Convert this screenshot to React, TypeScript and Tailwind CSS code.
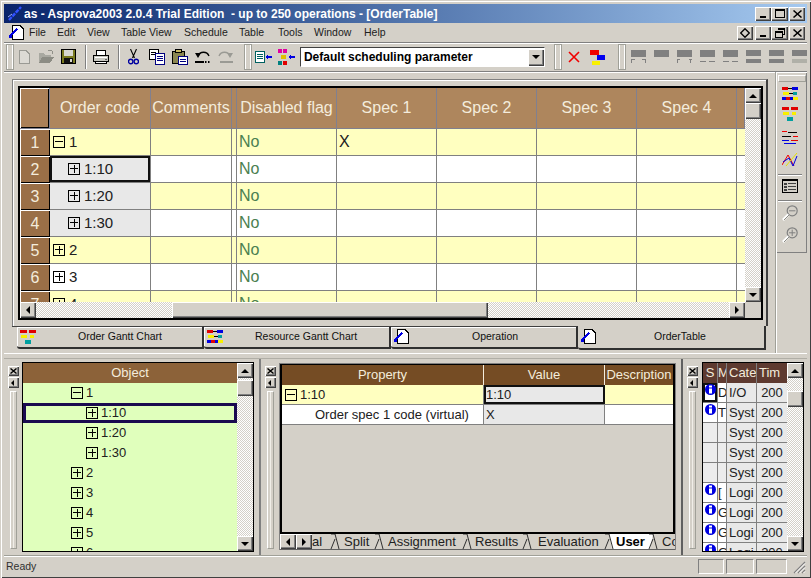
import React from "react";

const bevel = "shadow-[inset_1px_1px_0_#fff,inset_-1px_-1px_0_#404040,inset_-2px_-2px_0_#808080]";
const track = "bg-[repeating-conic-gradient(#d4d0c8_0_25%,#ffffff_0_50%)] bg-[length:2px_2px]";

function Tri({ dir }: { dir: "up" | "down" | "left" | "right" }) {
  const p = { up: "4,0 0,4 8,4", down: "0,0 8,0 4,4", left: "4,0 4,8 0,4", right: "0,0 0,8 4,4" }[dir];
  const horizontal = dir === "up" || dir === "down";
  return (
    <svg width={horizontal ? 8 : 4} height={horizontal ? 4 : 8} viewBox={horizontal ? "0 0 8 4" : "0 0 4 8"}>
      <polygon points={p} fill="#000" />
    </svg>
  );
}

function SB({ dir, w = 16, h = 16 }: { dir: "up" | "down" | "left" | "right"; w?: number; h?: number }) {
  return (
    <div style={{ width: w, height: h }} className={`bg-[#d4d0c8] flex items-center justify-center shrink-0 ${bevel}`}>
      <Tri dir={dir} />
    </div>
  );
}

function VScroll({ thumbTop, h, w = 16 }: { thumbTop: number; h: number; w?: number }) {
  return (
    <div style={{ width: w, height: h }} className="flex flex-col shrink-0">
      <SB dir="up" w={w} h={15} />
      <div style={{ height: thumbTop }} className={`${track} shrink-0`} />
      <div className={`h-[16px] shrink-0 bg-[#d4d0c8] ${bevel}`} />
      <div className={`flex-1 ${track}`} />
      <SB dir="down" w={w} h={15} />
    </div>
  );
}

function Box({ minus }: { minus?: boolean }) {
  return (
    <svg width="12" height="12" viewBox="0 0 12 12" className="shrink-0" shapeRendering="crispEdges">
      <rect x="0.5" y="0.5" width="11" height="11" fill="none" stroke="#000" />
      <rect x="2" y="5" width="8" height="1" fill="#000" />
      {!minus && <rect x="5.5" y="2" width="1" height="8" fill="#000" />}
    </svg>
  );
}

function DocPen({ size = 16 }: { size?: number }) {
  return (
    <svg width={size} height={size} viewBox="0 0 16 16" shapeRendering="crispEdges">
      <polygon points="3.5,0.5 11,0.5 14.5,4 14.5,14.5 3.5,14.5" fill="#fff" stroke="#000" />
      <polygon points="1,10 7,3 8.5,4.5 2.5,11" fill="#0000e0" />
      <rect x="0" y="10" width="3" height="3" fill="#0000e0" />
    </svg>
  );
}

function Rects({ items, w = 16, h = 16 }: { items: [number, number, number, number, string][]; w?: number; h?: number }) {
  return (
    <svg width={w} height={h} viewBox={`0 0 ${w} ${h}`} shapeRendering="crispEdges" className="shrink-0">
      {items.map((r, i) => (
        <rect key={i} x={r[0]} y={r[1]} width={r[2]} height={r[3]} fill={r[4]} />
      ))}
    </svg>
  );
}

const resGantt: [number, number, number, number, string][] = [
  [0, 1, 6, 3, "#e00000"], [6, 2, 4, 1, "#000"], [10, 1, 6, 3, "#0000e0"],
  [1, 6, 6, 3, "#f8f000"], [7, 7, 4, 1, "#000"], [11, 6, 4, 3, "#00a0a0"],
  [0, 11, 4, 3, "#0000e0"], [4, 11, 4, 3, "#e00000"], [8, 11, 3, 3, "#0000e0"], [11, 11, 5, 3, "#f8f000"],
];
const ordGantt: [number, number, number, number, string][] = [
  [0, 1, 7, 3, "#e00000"], [9, 1, 7, 3, "#e00000"],
  [1, 6, 6, 3, "#f8f000"], [10, 6, 4, 3, "#f8f000"],
  [5, 11, 6, 4, "#00a0a0"],
];

function IconNew() {
  return (
    <svg width="16" height="16" viewBox="0 0 16 16" shapeRendering="crispEdges">
      <polygon points="3.5,1.5 10,1.5 13.5,5 13.5,14.5 3.5,14.5" fill="#dcdad4" stroke="#9a9a94" />
    </svg>
  );
}
function IconOpen() {
  return (
    <svg width="17" height="16" viewBox="0 0 17 16" shapeRendering="crispEdges">
      <polygon points="1,4 6,4 7,6 13,6 13,8 5,8 1,14" fill="#a8a8a0" />
      <polygon points="4,8 16,8 12,14 1,14" fill="#8c8c84" />
      <rect x="10" y="1" width="4" height="1" fill="#909088" />
      <rect x="14" y="2" width="1" height="3" fill="#909088" />
    </svg>
  );
}
function IconSave() {
  return (
    <svg width="16" height="16" viewBox="0 0 16 16" shapeRendering="crispEdges">
      <rect x="0" y="0" width="15" height="15" fill="#000" />
      <rect x="1" y="1" width="13" height="13" fill="#7a7a20" />
      <rect x="3" y="1" width="9" height="6" fill="#d8d8d0" />
      <rect x="3" y="9" width="9" height="5" fill="#111" />
      <rect x="9" y="10" width="2" height="3" fill="#d8d8d0" />
    </svg>
  );
}
function IconPrint() {
  return (
    <svg width="17" height="16" viewBox="0 0 17 16" shapeRendering="crispEdges">
      <polygon points="4,1 12,1 13,6 3,6" fill="#fff" stroke="#000" strokeWidth="1" />
      <rect x="0.5" y="6.5" width="15" height="6" fill="#c8c8c0" stroke="#000" />
      <rect x="2" y="8" width="12" height="1" fill="#fff" />
      <rect x="2.5" y="12.5" width="11" height="2" fill="#fff" stroke="#000" />
      <rect x="12" y="10" width="2" height="1" fill="#606060" />
    </svg>
  );
}
function IconCut() {
  return (
    <svg width="11" height="16" viewBox="0 0 11 16">
      <path d="M2.5 0 L6.5 9 M8.5 0 L4.5 9" stroke="#000" strokeWidth="1.1" fill="none" />
      <circle cx="2.7" cy="12.5" r="2.2" fill="none" stroke="#0000a0" strokeWidth="1.4" />
      <circle cx="8.3" cy="12.5" r="2.2" fill="none" stroke="#0000a0" strokeWidth="1.4" />
    </svg>
  );
}
function IconCopy() {
  return (
    <svg width="16" height="16" viewBox="0 0 16 16" shapeRendering="crispEdges">
      <rect x="0.5" y="0.5" width="9" height="10" fill="#fff" stroke="#000" />
      <rect x="2" y="3" width="5" height="1" fill="#000" />
      <rect x="2" y="5" width="5" height="1" fill="#000" />
      <rect x="6.5" y="4.5" width="9" height="11" fill="#fff" stroke="#000080" />
      <rect x="8" y="7" width="6" height="1" fill="#000080" />
      <rect x="8" y="9" width="6" height="1" fill="#000080" />
      <rect x="8" y="11" width="6" height="1" fill="#000080" />
    </svg>
  );
}
function IconPaste() {
  return (
    <svg width="16" height="16" viewBox="0 0 16 16" shapeRendering="crispEdges">
      <rect x="0.5" y="2.5" width="12" height="12" fill="#8a8650" stroke="#000" />
      <rect x="3.5" y="0.5" width="6" height="3" fill="#c8b860" stroke="#000" />
      <rect x="6.5" y="7.5" width="9" height="8" fill="#fff" stroke="#000080" />
      <rect x="8" y="10" width="6" height="1" fill="#000080" />
      <rect x="8" y="12" width="6" height="1" fill="#000080" />
    </svg>
  );
}
function IconUndo({ on }: { on?: boolean }) {
  const c = on ? "#000" : "#9a9a94";
  return (
    <svg width="16" height="14" viewBox="0 0 16 14">
      <path d="M3 6 C5 1 12 1 14 6" fill="none" stroke={c} strokeWidth="1.3" />
      <polygon points="0,3 6,3 3,8" fill={c} />
      <rect x="0" y="11" width="9" height="2" fill={c} />
      <rect x="10" y="11" width="1.5" height="2" fill={c} />
      <rect x="13" y="11" width="1.5" height="2" fill={c} />
    </svg>
  );
}
function IconRedo() {
  const c = "#9a9a94";
  return (
    <svg width="16" height="14" viewBox="0 0 16 14">
      <path d="M2 6 C4 1 11 1 13 6" fill="none" stroke={c} strokeWidth="1.3" />
      <polygon points="10,3 16,3 13,8" fill={c} />
      <rect x="3" y="11" width="13" height="2" fill={c} />
    </svg>
  );
}
function IconListArrow() {
  return (
    <svg width="17" height="14" viewBox="0 0 17 14" shapeRendering="crispEdges">
      <rect x="0.5" y="1.5" width="9" height="11" fill="#fff" stroke="#006060" />
      <rect x="2" y="4" width="6" height="1" fill="#006060" />
      <rect x="2" y="6" width="6" height="1" fill="#006060" />
      <rect x="2" y="8" width="6" height="1" fill="#006060" />
      <polygon points="10,7 13,4 13,6 17,6 17,8 13,8 13,10" fill="#0000e0" />
    </svg>
  );
}
function IconTreeArrow() {
  return (
    <svg width="17" height="16" viewBox="0 0 17 16" shapeRendering="crispEdges">
      <rect x="0" y="0" width="4" height="4" fill="#e000a0" />
      <rect x="5" y="0" width="4" height="4" fill="#e000a0" />
      <rect x="3" y="6" width="5" height="4" fill="#e0c000" />
      <rect x="0" y="12" width="4" height="4" fill="#008080" />
      <rect x="5" y="12" width="4" height="4" fill="#e00000" />
      <polygon points="10,8 13,5 13,7 17,7 17,9 13,9 13,11" fill="#0000e0" />
    </svg>
  );
}
function IconRedX() {
  return (
    <svg width="12" height="12" viewBox="0 0 12 12">
      <path d="M1 1 L11 11 M11 1 L1 11" stroke="#f00000" strokeWidth="1.6" fill="none" />
    </svg>
  );
}

function Dock({ v }: { v: number }) {
  const d: [number, number, number, number, string][][] = [
    [[0, 0, 15, 7, "#808080"], [0, 9, 4, 1, "#808080"], [11, 9, 4, 1, "#808080"], [0, 9, 1, 4, "#808080"], [14, 9, 1, 4, "#808080"]],
    [[0, 0, 15, 7, "#808080"]],
    [[0, 0, 15, 7, "#808080"], [0, 9, 3, 1, "#808080"], [12, 9, 3, 1, "#808080"], [0, 9, 1, 4, "#808080"], [13, 9, 1, 4, "#808080"]],
    [[0, 0, 15, 7, "#808080"], [0, 11, 6, 1, "#808080"], [9, 11, 6, 1, "#808080"]],
    [[0, 0, 15, 7, "#808080"], [0, 11, 6, 1, "#808080"], [9, 11, 6, 1, "#808080"]],
    [[0, 0, 15, 6, "#808080"], [0, 9, 15, 4, "#808080"]],
    [[0, 0, 15, 6, "#808080"], [0, 9, 15, 4, "#808080"]],
    [[0, 0, 15, 6, "#808080"], [0, 9, 15, 4, "#b0b0a8"]],
  ];
  return <Rects items={d[v]} w={15} h={14} />;
}

function Grip({ cls = "" }: { cls?: string }) {
  return <div className={`w-[6px] border-l border-r border-white bg-[#d4d0c8] outline outline-1 outline-[#a0a098] ${cls}`} />;
}

function Sep() {
  return <div className="w-[2px] h-[24px] border-l border-[#808080] border-r border-r-white" />;
}

function WinBtn({ children, w = 16 }: { children: React.ReactNode; w?: number }) {
  return (
    <div style={{ width: w }} className={`h-[14px] bg-[#d4d0c8] flex items-center justify-center ${bevel}`}>
      {children}
    </div>
  );
}
const XGlyph = () => (
  <svg width="9" height="8" viewBox="0 0 9 8">
    <path d="M0.5 0.5 L8.5 7.5 M8.5 0.5 L0.5 7.5" stroke="#000" strokeWidth="1.5" />
  </svg>
);
const MinGlyph = () => <div className="w-[6px] h-[2px] bg-black mt-[6px]" />;
const MaxGlyph = () => <div className="w-[10px] h-[9px] border border-black border-t-2" />;
const RestoreGlyph = () => (
  <svg width="10" height="10" viewBox="0 0 10 10" shapeRendering="crispEdges">
    <path d="M3 2 V0.5 H9.5 V6 H7.5 M0.5 3.5 H7 V9.5 H0.5 Z" fill="none" stroke="#000" />
    <rect x="0" y="3" width="7" height="2" fill="#000" />
    <rect x="3" y="0" width="7" height="2" fill="#000" />
  </svg>
);
const Diamond = () => (
  <svg width="10" height="10" viewBox="0 0 10 10">
    <polygon points="5,0.7 9.3,5 5,9.3 0.7,5" fill="none" stroke="#000" strokeWidth="1.3" />
  </svg>
);

const menus: [string, number][] = [
  ["File", 28], ["Edit", 30], ["View", 34], ["Table View", 63], ["Schedule", 55], ["Table", 39], ["Tools", 36], ["Window", 50], ["Help", 30],
];
const cols = [30, 101, 81, 5, 100, 100, 100, 100, 100, 8];
const heads = ["", "Order code", "Comments", "", "Disabled flag", "Spec 1", "Spec 2", "Spec 3", "Spec 4", ""];

const mainRows = [
  { n: "1", code: "1", level: 0, minus: true, spec: "X" },
  { n: "2", code: "1:10", level: 1, sel: true },
  { n: "3", code: "1:20", level: 1 },
  { n: "4", code: "1:30", level: 1 },
  { n: "5", code: "2", level: 0 },
  { n: "6", code: "3", level: 0 },
  { n: "7", code: "4", level: 0 },
];

function MainGrid() {
  return (
    <div className="ml-[5px] w-[745px] h-[234px] border-2 border-black flex flex-col bg-[#d4d0c8]">
      <div className="flex h-[214px]">
        <div className="w-[725px] h-[214px] overflow-hidden flex flex-col">
          <div className="flex h-[41px] shrink-0">
            {cols.map((w, i) => (
              <div
                key={i}
                style={{ width: w }}
                className={`shrink-0 h-[41px] flex items-center justify-center text-[16px] font-light text-[#f4ecdc] whitespace-nowrap overflow-hidden border-r border-b border-[#808090] ${i === 0 ? "bg-[#ab8057] shadow-[inset_1px_1px_0_#fff,inset_-1px_-1px_0_#000]" : "bg-[#ae865d]"}`}
              >
                {heads[i]}
              </div>
            ))}
          </div>
          {mainRows.map((r, ri) => {
            const bg = ri % 2 === 0 ? "bg-[#ffffc0]" : "bg-white";
            return (
              <div key={r.n} className="flex h-[27px] shrink-0">
                <div className="w-[30px] shrink-0 bg-[#9a6f47] text-[#f4ecdc] text-[16px] flex items-center justify-center shadow-[inset_1px_1px_0_#fff,inset_-1px_-1px_0_#000]">
                  {r.n}
                </div>
                <div
                  className={`w-[101px] shrink-0 flex items-center gap-[4px] text-[15px] text-[#202020] border-r border-b border-[#808080] ${r.level ? "bg-[#e8e8e8] pl-[18px]" : `${bg} pl-[3px]`} ${r.sel ? "shadow-[inset_0_0_0_2px_#101010]" : ""}`}
                >
                  <Box minus={r.minus} />
                  <span>{r.code}</span>
                </div>
                <div className={`w-[81px] shrink-0 border-r border-b border-[#808080] ${bg}`} />
                <div className={`w-[5px] shrink-0 border-r border-b border-[#808080] ${bg}`} />
                <div className={`w-[100px] shrink-0 flex items-center pl-[2px] text-[16px] text-[#4a8050] border-r border-b border-[#808080] ${bg}`}>No</div>
                <div className={`w-[100px] shrink-0 flex items-center pl-[2px] text-[16px] text-[#202020] border-r border-b border-[#808080] ${bg}`}>{r.spec}</div>
                <div className={`w-[100px] shrink-0 border-r border-b border-[#808080] ${bg}`} />
                <div className={`w-[100px] shrink-0 border-r border-b border-[#808080] ${bg}`} />
                <div className={`w-[100px] shrink-0 border-r border-b border-[#808080] ${bg}`} />
                <div className={`w-[8px] shrink-0 border-b border-[#808080] ${bg}`} />
              </div>
            );
          })}
        </div>
        <VScroll thumbTop={0} h={214} />
      </div>
      <div className="flex h-[16px]">
        <SB dir="left" />
        <div className={`w-[136px] ${track}`} />
        <div className={`w-[316px] bg-[#d4d0c8] ${bevel}`} />
        <div className={`w-[241px] ${track}`} />
        <SB dir="right" />
        <div className="w-[16px] bg-[#d4d0c8]" />
      </div>
    </div>
  );
}

function TabBtn({ icon, label, w, textPl }: { icon: React.ReactNode; label: string; w: number; textPl: number }) {
  return (
    <div
      style={{ width: w }}
      className="h-[23px] shrink-0 border-t border-t-[#404040] border-r-2 border-b-2 border-r-[#303030] border-b-[#303030] rounded-bl-[3px] shadow-[inset_1px_1px_0_#fff] flex items-center text-[10.5px] text-[#101010] pl-[3px]"
    >
      <div className="w-[16px] shrink-0 flex items-center">{icon}</div>
      <div style={{ paddingLeft: textPl }} className="whitespace-nowrap">{label}</div>
    </div>
  );
}

function DockCtl() {
  return (
    <div className="w-[18px] shrink-0 flex flex-col items-center pt-[7px]">
      <div className={`w-[11px] h-[10px] flex items-center justify-center bg-[#d4d0c8] ${bevel}`}>
        <svg width="7" height="6" viewBox="0 0 7 6"><path d="M0.5 0.5 L6.5 5.5 M6.5 0.5 L0.5 5.5" stroke="#000" strokeWidth="1.4" /></svg>
      </div>
      <div className={`w-[11px] h-[11px] mt-[1px] flex items-center justify-center bg-[#d4d0c8] ${bevel}`}>
        <svg width="4" height="6" viewBox="0 0 4 6"><polygon points="3,0 3,6 0,3" fill="#000" /></svg>
      </div>
      <div className="w-[7px] h-[158px] mt-[3px] border border-white border-r-[#a0a098] border-b-[#a0a098] flex justify-center">
        <div className="w-px h-full bg-[#f0eee8]" />
      </div>
    </div>
  );
}

function TabLambda({ white }: { white?: "l" | "r" }) {
  return (
    <svg width="12" height="16" viewBox="0 0 12 16" className="shrink-0">
      {white === "r" && <polygon points="6,0 12,0 12,15 9,15" fill="#fff" />}
      {white === "l" && <polygon points="0,0 6,0 3,15 0,15" fill="#fff" />}
      <path d="M2 0 L6 0 M6 0 L10 15 M6 5 L2 15" stroke="#303030" strokeWidth="1" fill="none" />
    </svg>
  );
}

const tree: [string, number, boolean?, boolean?][] = [
  ["1", 0, true], ["1:10", 1, false, true], ["1:20", 1], ["1:30", 1], ["2", 0], ["3", 0], ["4", 0], ["5", 0], ["6", 0],
];

const Info = () => (
  <svg width="11" height="11" viewBox="0 0 11 11" className="shrink-0">
    <circle cx="5.5" cy="5.5" r="5.5" fill="#0000e0" />
    <rect x="4" y="1.5" width="3" height="2" fill="#fff" />
    <rect x="4" y="4.5" width="3" height="5" fill="#fff" />
  </svg>
);

const logRows: [boolean, string, string][] = [
  [true, "D", "I/O"], [true, "T", "Syst"], [false, "", "Syst"], [false, "", "Syst"], [false, "", "Syst"],
  [true, "[", "Logi"], [true, "G", "Logi"], [true, "G", "Logi"], [true, "G", "Logi"],
];

const ZoomIcon = ({ plus }: { plus?: boolean }) => (
  <svg width="16" height="16" viewBox="0 0 16 16" className="block">
    <circle cx="10.2" cy="5.8" r="5" fill="none" stroke="#808080" strokeWidth="1.2" />
    <path d={plus ? "M7 5.8 H13.4 M10.2 2.6 V9" : "M7 5.8 H13.4"} stroke="#808080" strokeWidth="1" />
    <path d="M1 15 L6.5 9.5" stroke="#fff" strokeWidth="2.6" />
    <path d="M2 15 L7 10" stroke="#8a8a84" strokeWidth="1" />
  </svg>
);

export default function App() {
  return (
    <div className="w-[811px] h-[578px] overflow-hidden bg-[#d4d0c8] flex flex-col pt-[4px] pb-[2px] px-[4px] text-black [font-family:'Liberation_Sans',Arial,sans-serif] shadow-[inset_1px_1px_0_#d4d0c8,inset_2px_2px_0_#fff,inset_-1px_-1px_0_#404040]">
      {/* Title bar */}
      <div className="h-[19px] shrink-0 bg-gradient-to-r from-[#0a246a] to-[#a6caf0] flex items-center pl-[3px] pr-[2px]">
        <svg width="17" height="17" viewBox="0 0 17 17" className="shrink-0">
          <path d="M2 15 L14 2" stroke="#3050ff" strokeWidth="2.4" strokeDasharray="4 1" />
          <path d="M1 12 L5 9" stroke="#a0b0ff" strokeWidth="1" />
        </svg>
        <div className="flex-1 text-white font-bold text-[12px] whitespace-pre">as - Asprova2003 2.0.4 Trial Edition  - up to 250 operations - [OrderTable]</div>
        <div className="flex">
          <WinBtn><MinGlyph /></WinBtn>
          <WinBtn w={17}><MaxGlyph /></WinBtn>
          <div className="w-px" />
          <WinBtn><XGlyph /></WinBtn>
        </div>
      </div>
      {/* Menu bar */}
      <div className="h-[19px] shrink-0 flex items-center pl-[5px] pr-[2px] text-[10.5px] text-[#202020]">
        <DocPen />
        <div className="flex ml-[4px] flex-1">
          {menus.map(([m, w]) => (
            <div key={m} style={{ width: w }} className="whitespace-nowrap">{m}</div>
          ))}
        </div>
        <div className="flex">
          <WinBtn><Diamond /></WinBtn>
          <div className="w-[2px]" />
          <WinBtn><MinGlyph /></WinBtn>
          <WinBtn w={17}><RestoreGlyph /></WinBtn>
          <div className="w-px" />
          <WinBtn><XGlyph /></WinBtn>
        </div>
      </div>
      {/* Toolbar */}
      <div className="h-[30px] shrink-0 border-t border-t-[#808080] border-b border-b-[#808080] shadow-[inset_0_1px_0_#fff,0_1px_0_#fff] flex items-center pl-[3px] overflow-hidden">
        <Grip cls="h-[24px]" />
        <div className="ml-[3px] flex items-center w-[16px]"><IconNew /></div>
        <div className="ml-[6px] w-[17px]"><IconOpen /></div>
        <div className="ml-[6px] w-[16px]"><IconSave /></div>
        <div className="ml-[8px]"><Sep /></div>
        <div className="ml-[6px] w-[17px]"><IconPrint /></div>
        <div className="ml-[8px]"><Sep /></div>
        <div className="ml-[8px] w-[11px]"><IconCut /></div>
        <div className="ml-[10px] w-[16px]"><IconCopy /></div>
        <div className="ml-[7px] w-[16px]"><IconPaste /></div>
        <div className="ml-[7px] w-[16px]"><IconUndo on /></div>
        <div className="ml-[6px] w-[16px]"><IconRedo /></div>
        <div className="ml-[12px]"><Grip cls="h-[24px]" /></div>
        <div className="ml-[4px] w-[17px]"><IconListArrow /></div>
        <div className="ml-[6px] w-[17px]"><IconTreeArrow /></div>
        <div className="ml-[5px] w-[248px] h-[20px] bg-white border-t border-l border-t-[#404040] border-l-[#404040] border-r border-b border-r-white border-b-white flex items-center">
          <div className="flex-1 pl-[3px] text-[12px] font-bold whitespace-nowrap">Default scheduling parameter</div>
          <SB dir="down" w={16} h={17} />
        </div>
        <div className="ml-[10px]"><Grip cls="h-[24px]" /></div>
        <div className="ml-[7px] w-[12px]"><IconRedX /></div>
        <div className="ml-[10px]">
          <Rects w={16} h={16} items={[[0, 1, 9, 5, "#f00000"], [7, 6, 8, 5, "#0000f0"], [2, 12, 8, 4, "#f8f000"]]} />
        </div>
        <div className="ml-[13px]"><Grip cls="h-[24px]" /></div>
        <div className="ml-[6px] flex gap-[8px]">
          {[0, 1, 2, 3, 4, 5, 6, 7].map((v) => <Dock key={v} v={v} />)}
        </div>
      </div>
      {/* Main area */}
      <div className="h-[281px] shrink-0 flex">
        <div className="flex-1 min-w-0 flex flex-col">
          <div className="mt-[7px] ml-[8px] w-[756px] h-[247px] shrink-0 border-t border-l border-r-2 border-t-[#808080] border-l-[#808080] border-r-[#404040] shadow-[inset_1px_1px_0_#fff] pt-[6px]">
            <MainGrid />
          </div>
          <div className="flex ml-[8px]">
            <div className="w-[5px] h-[1px] bg-[#404040]" />
            <TabBtn w={187} textPl={42} label="Order Gantt Chart" icon={<Rects items={ordGantt} />} />
            <TabBtn w={187} textPl={32} label="Resource Gantt Chart" icon={<Rects items={resGantt} />} />
            <TabBtn w={187} textPl={62} label="Operation" icon={<DocPen />} />
            <div className="w-[188px] h-[24px] shrink-0 border-r-2 border-b-2 border-r-[#303030] border-b-[#303030] rounded-bl-[3px] flex items-center text-[10.5px] text-[#101010] pl-[3px]">
              <DocPen />
              <span className="pl-[57px]">OrderTable</span>
            </div>
          </div>
        </div>
        {/* Right toolbar */}
        <div className="w-[32px] shrink-0 border-l border-l-[#a0a098] shadow-[inset_1px_0_0_#fff]">
          <div className="ml-px w-[30px] h-[180px] mt-[1px] pr-[3px] border-r border-b border-r-[#808080] border-b-[#808080] flex flex-col items-center">
            <div className="w-[28px] ml-[3px] h-[7px] mt-[2px] border border-white border-b-[#a0a098] border-r-[#a0a098] shrink-0" />
            <div className="mt-[4px]"><Rects items={resGantt} /></div>
            <div className="mt-[4px]"><Rects items={ordGantt} /></div>
            <div className="mt-[7px]">
              <Rects items={[[0, 2, 5, 1, "#f00000"], [6, 3, 9, 1, "#000"], [0, 7, 9, 1, "#000"], [11, 7, 5, 1, "#f00000"], [0, 11, 7, 1, "#0000e0"], [9, 11, 7, 1, "#e00000"], [2, 14, 12, 1, "#0000e0"]]} />
            </div>
            <div className="mt-[7px]">
              <svg width="16" height="16" viewBox="0 0 16 16" className="block">
                <path d="M0 13 L6 3 L12 14" stroke="#f00000" fill="none" />
                <path d="M1 10 L7 6 L11 14 L15 4" stroke="#0000e0" fill="none" />
                <path d="M4 14 L9 8 L15 1" stroke="#e8e000" fill="none" />
              </svg>
            </div>
            <div className="w-[24px] h-px bg-[#808080] mt-[6px] shadow-[0_1px_0_#fff]" />
            <div className="mt-[4px]">
              <svg width="16" height="14" viewBox="0 0 16 14" shapeRendering="crispEdges" className="block">
                <rect x="0.5" y="0.5" width="15" height="13" fill="#d4d0c8" stroke="#000" />
                <rect x="0" y="0" width="16" height="2" fill="#000" />
                <rect x="2" y="4" width="3" height="2" fill="#404040" />
                <rect x="6" y="4" width="8" height="1" fill="#404040" />
                <rect x="2" y="7" width="3" height="2" fill="#404040" />
                <rect x="6" y="7" width="8" height="1" fill="#404040" />
                <rect x="6" y="10" width="8" height="1" fill="#404040" />
                <rect x="2" y="10" width="3" height="2" fill="#404040" />
              </svg>
            </div>
            <div className="w-[24px] h-px bg-[#808080] mt-[7px] shadow-[0_1px_0_#fff]" />
            <div className="mt-[4px]"><ZoomIcon /></div>
            <div className="mt-[6px]"><ZoomIcon plus /></div>
          </div>
        </div>
      </div>
      {/* Splitter */}
      <div className="h-[6px] shrink-0 border-t border-t-white border-b border-b-[#b0aea6]" />
      {/* Lower panes */}
      <div className="h-[197px] shrink-0 flex">
        {/* Left pane */}
        <div className="w-[257px] shrink-0 flex border-r-2 border-r-[#808080]">
          <DockCtl />
          <div className="mt-[3px] w-[232px] h-[190px] border border-black flex overflow-hidden">
            <div className="w-[214px] flex flex-col">
              <div className="h-[20px] shrink-0 bg-[#8c6239] text-[#f4ecdc] text-[13px] flex items-center justify-center">Object</div>
              <div className="flex-1 bg-[#e0ffbc] overflow-hidden">
                {tree.map(([t, lvl, minus, sel]) => (
                  <div
                    key={t}
                    className={`h-[20px] flex items-center gap-[3px] text-[13px] text-[#202020] ${lvl ? "pl-[63px]" : "pl-[48px]"} ${sel ? "shadow-[inset_0_0_0_3px_#1a0a50]" : ""}`}
                  >
                    <Box minus={minus} />
                    <span>{t}</span>
                  </div>
                ))}
              </div>
            </div>
            <VScroll thumbTop={2} h={188} />
          </div>
        </div>
        {/* Middle pane */}
        <div className="w-[422px] shrink-0 flex border-r-2 border-r-[#606060] pr-[4px]">
          <DockCtl />
          <div className="mt-[4px] w-[397px] h-[187px] flex flex-col border-t border-l border-r border-t-[#808080] border-l-[#808080] border-r-[#808080]">
            <div className="h-[170px] border-2 border-t-1 border-black bg-[#d4d0c8] flex flex-col">
              <div className="flex h-[20px] shrink-0 text-[13px] text-[#f4ecdc] bg-[#754c24]">
                <div className="w-[202px] flex items-center justify-center border-r border-[#f4ecdc]">Property</div>
                <div className="w-[121px] flex items-center justify-center border-r border-[#f4ecdc]">Value</div>
                <div className="flex-1 flex items-center justify-center whitespace-nowrap overflow-hidden">Description</div>
              </div>
              <div className="flex h-[20px] shrink-0 text-[13px] text-[#202020] bg-[#ffffc0] border-b border-[#808080]">
                <div className="w-[202px] pl-[3px] flex items-center gap-[3px] border-r border-[#808080]"><Box minus /><span>1:10</span></div>
                <div className="w-[121px] pl-[2px] flex items-center bg-[#e8e8e8] shadow-[inset_0_0_0_2px_#101010]">1:10</div>
                <div className="flex-1" />
              </div>
              <div className="flex h-[20px] shrink-0 text-[13px] text-[#202020] bg-white border-b border-[#808080]">
                <div className="w-[202px] pl-[33px] flex items-center whitespace-nowrap border-r border-[#808080]">Order spec 1 code (virtual)</div>
                <div className="w-[121px] pl-[2px] flex items-center bg-[#e8e8e8] border-r border-[#808080]">X</div>
                <div className="flex-1" />
              </div>
            </div>
            <div className="h-[16px] shrink-0 flex text-[13px] text-[#202020] border-b border-b-[#606060] overflow-hidden leading-[15px]">
              <SB dir="left" w={16} h={15} />
              <SB dir="right" w={16} h={15} />
              <div className="w-[17px] shrink-0">al</div>
              <TabLambda />
              <div className="w-[32px] shrink-0 pl-[3px]">Split</div>
              <TabLambda />
              <div className="w-[76px] shrink-0 pl-[3px]">Assignment</div>
              <TabLambda />
              <div className="w-[48px] shrink-0 pl-[2px]">Results</div>
              <TabLambda />
              <div className="w-[70px] shrink-0 pl-[5px]">Evaluation</div>
              <TabLambda white="r" />
              <div className="w-[32px] shrink-0 pl-px bg-white font-bold text-black">User</div>
              <TabLambda white="l" />
              <div className="flex-1 pl-[3px] whitespace-nowrap overflow-hidden">Co</div>
            </div>
          </div>
        </div>
        {/* Right pane */}
        <div className="flex-1 flex">
          <DockCtl />
          <div className="mt-[3px] ml-px w-[102px] h-[190px] border border-black flex overflow-hidden">
            <div className="w-[84px] flex flex-col">
              <div className="h-[20px] shrink-0 bg-[#5e3a30] text-[#f4ecdc] text-[13px] flex">
                <div className="w-[15px] text-center border-r border-[#808080] overflow-hidden leading-[20px]">S</div>
                <div className="w-[9px] border-r border-[#808080] overflow-hidden leading-[20px]">M</div>
                <div className="w-[30px] pl-[2px] border-r border-[#808080] overflow-hidden leading-[20px]">Cate</div>
                <div className="w-[30px] pl-[2px] overflow-hidden leading-[20px] whitespace-nowrap">Tim</div>
              </div>
              <div className="flex-1 overflow-hidden bg-white">
                {logRows.map((r, i) => (
                  <div key={i} className="flex h-[20px] text-[13px] text-[#202020]">
                    <div className={`w-[15px] shrink-0 flex justify-center pt-[1px] border-r border-b border-[#808080] ${i === 0 ? "bg-white shadow-[inset_0_0_0_2px_#101010]" : r[0] ? "bg-white" : "bg-[#ececec]"}`}>
                      {r[0] && <Info />}
                    </div>
                    <div className={`w-[9px] shrink-0 overflow-hidden leading-[20px] border-r border-b border-[#808080] ${r[0] ? "bg-white" : "bg-[#ececec]"}`}>{r[1]}</div>
                    <div className="w-[30px] shrink-0 pl-[2px] overflow-hidden leading-[20px] bg-[#e8e8e8] border-r border-b border-[#808080]">{r[2]}</div>
                    <div className="w-[30px] shrink-0 text-center leading-[20px] bg-[#e8e8e8] border-b border-[#808080]">200</div>
                  </div>
                ))}
              </div>
            </div>
            <VScroll thumbTop={13} h={188} />
          </div>
        </div>
      </div>
      {/* Status bar */}
      <div className="h-[20px] shrink-0 border-t border-t-white shadow-[0_-1px_0_#a0a098] flex items-center pl-[2px] text-[10.5px] text-[#303030]">
        <div className="flex-1">Ready</div>
        <div className="flex gap-[2px] items-center">
          <div className="w-[26px] h-[15px] border border-t-[#808080] border-l-[#808080] border-r-white border-b-white" />
          <div className="w-[28px] h-[15px] border border-t-[#808080] border-l-[#808080] border-r-white border-b-white" />
          <div className="w-[31px] h-[15px] border border-t-[#808080] border-l-[#808080] border-r-white border-b-white" />
          <svg width="14" height="14" viewBox="0 0 14 14" className="ml-[3px] mr-[1px]">
            <path d="M13 2 L2 13 M13 6 L6 13 M13 10 L10 13" stroke="#808080" strokeWidth="1.2" />
            <path d="M13 3.5 L3.5 13 M13 7.5 L7.5 13 M13 11.5 L11.5 13" stroke="#fff" strokeWidth="1" />
          </svg>
        </div>
      </div>
    </div>
  );
}
